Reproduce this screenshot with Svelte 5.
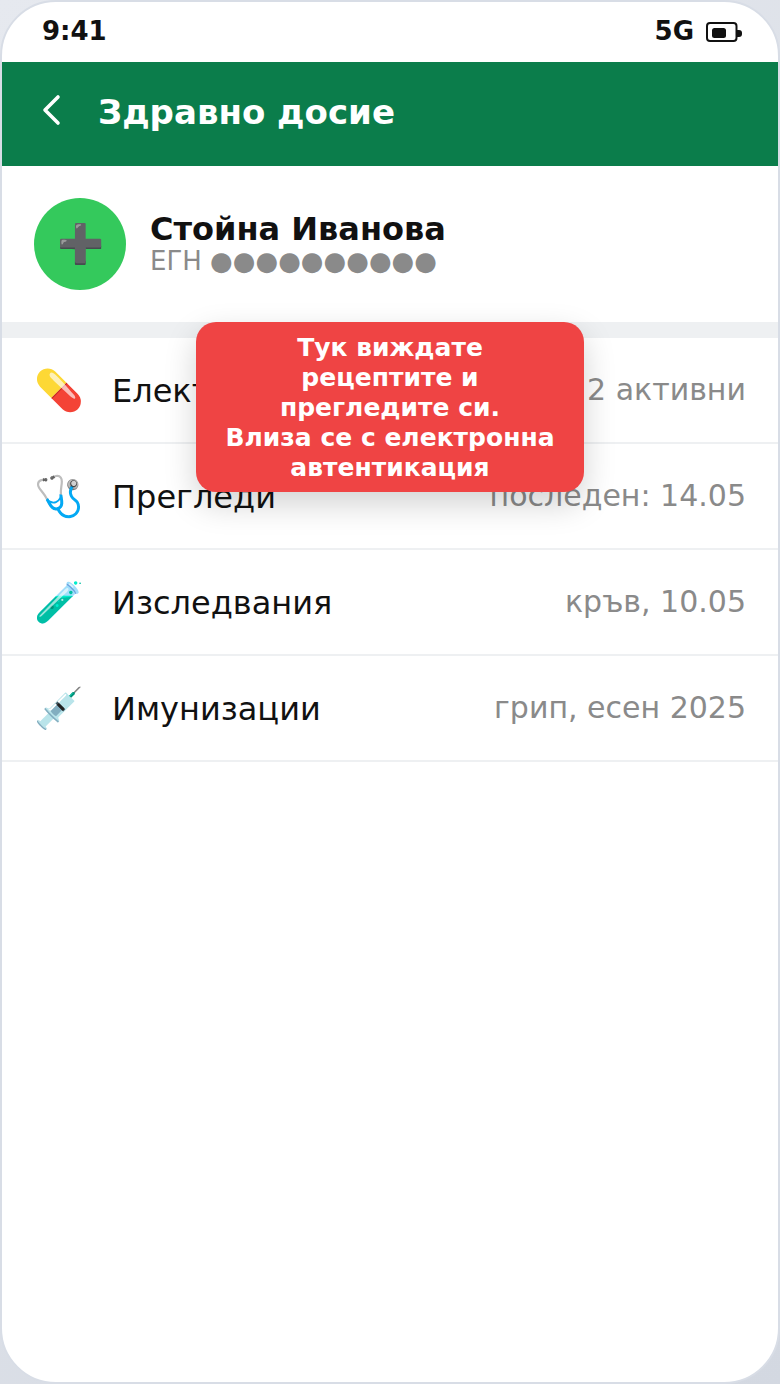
<script>
  const records = [
    { icon: '💊', name: 'Електронни рецепти', note: '2 активни' },
    { icon: '🩺', name: 'Прегледи', note: 'последен: 14.05' },
    { icon: '🧪', name: 'Изследвания', note: 'кръв, 10.05' },
    { icon: '💉', name: 'Имунизации', note: 'грип, есен 2025' },
  ];
</script>

<div class="page">
  <div class="phone">
    <div class="status">
      <span>9:41</span>
      <div class="status-right">
        <span>5G</span>
        <svg width="36" height="20" viewBox="0 0 36 20" aria-hidden="true">
          <rect x="1" y="1" width="29.5" height="18" rx="3" fill="none" stroke="#111" stroke-width="2" />
          <rect x="6" y="6" width="14" height="10" rx="2.5" fill="#111" />
          <path d="M31 8h2a3 3 0 0 1 3 3v1a3 3 0 0 1-3 3h-2z" fill="#111" />
        </svg>
      </div>
    </div>

    <header class="topbar">
      <svg class="back" width="20" height="32" viewBox="0 0 20 32" aria-hidden="true">
        <path d="M16 3 3 16l13 13" fill="none" stroke="#fff" stroke-width="3.6" stroke-linecap="round" stroke-linejoin="round" />
      </svg>
      <h1>Здравно досие</h1>
    </header>

    <section class="profile">
      <div class="avatar">➕</div>
      <div class="who">
        <div class="name">Стойна Иванова</div>
        <div class="egn">ЕГН ●●●●●●●●●●</div>
      </div>
    </section>

    <div class="rows">
      {#each records as r}
        <div class="row">
          <span class="icon">{r.icon}</span>
          <span class="label">{r.name}</span>
          <span class="note">{r.note}</span>
        </div>
      {/each}

      <div class="tip">
        Тук виждате рецептите и прегледите си.<br />Влиза се с електронна автентикация
      </div>
    </div>
  </div>
</div>

<style>
  :global(body) {
    margin: 0;
    background: #dfe3ea;
  }

  .page {
    width: 780px;
    height: 1384px;
    background: linear-gradient(135deg, #e6e9ef, #d3d8e1);
    font-family: "DejaVu Sans", sans-serif;
  }

  .phone {
    box-sizing: border-box;
    width: 780px;
    height: 1384px;
    border: 2px solid #d8dde6;
    border-radius: 56px;
    background: #fff;
    overflow: hidden;
  }

  .status {
    height: 60px;
    box-sizing: border-box;
    padding: 0 36px 2px 40px;
    display: flex;
    align-items: center;
    justify-content: space-between;
    font-size: 26px;
    font-weight: 700;
    color: #111;
  }

  .status-right {
    display: flex;
    align-items: center;
    gap: 12px;
  }

  .status-right svg {
    margin-top: 2px;
  }

  .topbar {
    box-sizing: border-box;
    height: 104px;
    background: #0b7d4b;
    display: flex;
    align-items: center;
    gap: 36px;
    padding: 0 0 4px 40px;
  }

  .back {
    display: block;
    margin-bottom: 4px;
  }

  h1 {
    margin: 0;
    font-size: 34px;
    font-weight: 700;
    color: #fff;
  }

  .profile {
    display: flex;
    align-items: center;
    gap: 24px;
    padding: 32px;
    border-bottom: 16px solid #eef0f2;
  }

  .avatar {
    width: 92px;
    height: 92px;
    border-radius: 50%;
    background: #34c95c;
    display: flex;
    align-items: center;
    justify-content: center;
    font-size: 38px;
    line-height: 1;
  }

  .name {
    font-size: 32px;
    font-weight: 700;
    color: #111;
    line-height: 34px;
  }

  .egn {
    font-size: 26px;
    color: #8a8a8a;
    line-height: 30px;
  }

  .rows {
    position: relative;
  }

  .row {
    box-sizing: border-box;
    height: 106px;
    display: flex;
    align-items: center;
    padding: 0 32px;
    border-bottom: 2px solid #eef0f2;
  }

  .icon {
    width: 78px;
    flex: none;
    font-size: 40px;
    line-height: 1;
  }

  .label {
    font-size: 32px;
    color: #111;
    padding-top: 2px;
  }

  .note {
    margin-left: auto;
    font-size: 30px;
    color: #8a8a8a;
    padding-bottom: 1px;
  }

  .tip {
    position: absolute;
    top: -16px;
    left: 194px;
    box-sizing: border-box;
    width: 388px;
    padding: 11px 24px 9px;
    background: #ef4444;
    border-radius: 20px;
    box-shadow: 0 12px 32px rgba(0, 0, 0, 0.18);
    color: #fff;
    font-size: 25px;
    font-weight: 700;
    line-height: 30px;
    text-align: center;
  }
</style>
